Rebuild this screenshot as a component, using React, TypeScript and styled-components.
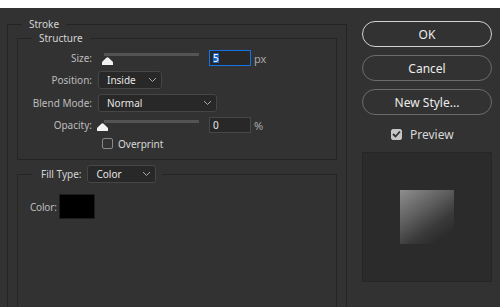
import React from "react";
import styled, { createGlobalStyle } from "styled-components";

const GlobalStyle = createGlobalStyle`
  html, body { margin: 0; padding: 0; background: #ffffff; }
  body { font-family: "Noto Sans", "Open Sans", sans-serif; }
  * { box-sizing: border-box; }
`;

const Page = styled.div`
  padding-top: 8px;
  width: 500px;
  height: 307px;
`;

const Dialog = styled.div`
  display: flex;
  width: 500px;
  height: 299px;
  background: #323232;
  overflow: hidden;
  color: #c8c8c8;
  font-size: 10px;
`;

const Main = styled.div`
  width: 347px;
  padding-left: 7px;
  flex: none;
`;

const Group = styled.fieldset<{ $pad?: string; $mt?: number; $minH?: number }>`
  margin: ${(p) => p.$mt ?? 0}px 0 0 0;
  padding: ${(p) => p.$pad ?? "0"};
  border: 1px solid #242424;
  min-width: 0;
  min-height: ${(p) => (p.$minH ? `${p.$minH}px` : "auto")};
`;

const Legend = styled.legend<{ $ml: number; $pl?: number; $pr?: number }>`
  margin-left: ${(p) => p.$ml}px;
  padding: 0 ${(p) => p.$pr ?? 7}px 0 ${(p) => p.$pl ?? 7}px;
  line-height: 14px;
  height: 14px;
  color: #d4d4d4;
  font-size: 10px;
  display: flex;
  align-items: center;
`;

const FillLegend = styled(Legend)`
  height: 18px;
  gap: 6px;
`;

const Row = styled.div<{ $mt: number; $h?: number }>`
  display: flex;
  align-items: center;
  height: ${(p) => p.$h ?? 18}px;
  margin-top: ${(p) => p.$mt}px;
`;

const Label = styled.span`
  width: 74px;
  text-align: right;
  margin-right: 6px;
  color: #bdbdbd;
  flex: none;
`;

const SliderBox = styled.div`
  position: relative;
  width: 105px;
  height: 18px;
  margin-right: 6px;
  flex: none;
`;

const Track = styled.div`
  position: absolute;
  left: 6px;
  top: 4px;
  width: 95px;
  height: 3px;
  background: #545454;
`;

const Thumb = styled.svg`
  position: absolute;
  width: 11px;
  height: 8px;
`;

const NumBox = styled.div<{ $focus?: boolean }>`
  width: 42px;
  height: 16px;
  border: 1px solid ${(p) => (p.$focus ? "#1473e6" : "#474747")};
  background: #282828;
  color: #e8e8e8;
  display: flex;
  align-items: center;
  padding-left: 3px;
  flex: none;
`;

const Selected = styled.span`
  background: #1666d0;
  color: #ffffff;
  line-height: 10px;
`;

const Unit = styled.span`
  margin-left: 3px;
  color: #a8a8a8;
  font-size: 11px;
`;

const Select = styled.div<{ $w: number }>`
  width: ${(p) => p.$w}px;
  height: 18px;
  border: 1px solid #464646;
  border-radius: 3px;
  background: #282828;
  color: #e6e6e6;
  display: flex;
  align-items: center;
  justify-content: space-between;
  padding: 0 4px 0 8px;
  flex: none;
`;

const Chevron = styled.svg`
  width: 9px;
  height: 6px;
`;

const Check = styled.span<{ $checked?: boolean }>`
  width: 11px;
  height: 11px;
  border-radius: 2px;
  border: 1px solid ${(p) => (p.$checked ? "#c6c6c6" : "#8a8a8a")};
  background: ${(p) => (p.$checked ? "#c6c6c6" : "transparent")};
  display: inline-flex;
  align-items: center;
  justify-content: center;
  flex: none;
`;

const CheckText = styled.span<{ $size?: number }>`
  color: #d8d8d8;
  font-size: ${(p) => p.$size ?? 10}px;
`;

const OverRow = styled(Row)`
  padding-left: 84px;
  gap: 5px;
`;

const ColorRow = styled(Row)`
  padding-left: 12px;
  gap: 2px;
`;

const ColorLabel = styled.span`
  color: #bdbdbd;
  letter-spacing: -0.2px;
`;

const Swatch = styled.div`
  width: 36px;
  height: 25px;
  background: #000000;
  border: 1px solid #1e1e1e;
`;

const Side = styled.div`
  width: 130px;
  margin-left: 15px;
  padding-top: 13px;
  display: flex;
  flex-direction: column;
  gap: 8px;
  flex: none;
`;

const Button = styled.div<{ $primary?: boolean }>`
  height: 26px;
  border-radius: 13px;
  border: 1px solid ${(p) => (p.$primary ? "#d2d2d2" : "#6c6c6c")};
  color: #ececec;
  font-size: 12px;
  display: flex;
  align-items: center;
  justify-content: center;
`;

const PreviewRow = styled.div`
  display: flex;
  align-items: center;
  gap: 8px;
  padding-left: 29px;
  height: 14px;
  margin-top: 4px;
`;

const PreviewBox = styled.div`
  width: 130px;
  height: 130px;
  margin-top: 3px;
  background: #2b2b2b;
  border: 1px solid #262626;
  display: flex;
  align-items: center;
  justify-content: center;
`;

const Sample = styled.div`
  width: 54px;
  height: 54px;
  background: linear-gradient(145deg, #8e8e8e 0%, #5c5c5c 40%, #3a3a3a 65%, #2b2b2b 85%);
`;

const ThumbShape = ({ left, top }: { left: number; top: number }) => (
  <Thumb viewBox="0 0 11 8" style={{ left, top }}>
    <path
      d="M0 8 L0 5.6 Q0 4.6 1 3.9 L4.4 0.7 Q5.5 -0.2 6.6 0.7 L10 3.9 Q11 4.6 11 5.6 L11 8 Z"
      fill="#f2f2f2"
    />
  </Thumb>
);

const Down = () => (
  <Chevron viewBox="0 0 9 6">
    <path d="M1 1 L4.5 4.5 L8 1" fill="none" stroke="#a8a8a8" strokeWidth="1" />
  </Chevron>
);

export default function App() {
  return (
    <>
      <GlobalStyle />
      <Page>
        <Dialog>
          <Main>
            <Group $pad="0 9px" $mt={9} $minH={320}>
              <Legend $ml={5}>Stroke</Legend>
              <Group $pad="0 0 7px 0">
                <Legend $ml={14}>Structure</Legend>
                <Row $mt={4}>
                  <Label>Size:</Label>
                  <SliderBox>
                    <Track />
                    <ThumbShape left={4} top={8} />
                  </SliderBox>
                  <NumBox $focus>
                    <Selected>5</Selected>
                  </NumBox>
                  <Unit>px</Unit>
                </Row>
                <Row $mt={4}>
                  <Label>Position:</Label>
                  <Select $w={64}>
                    <span>Inside</span>
                    <Down />
                  </Select>
                </Row>
                <Row $mt={5}>
                  <Label>Blend Mode:</Label>
                  <Select $w={119}>
                    <span>Normal</span>
                    <Down />
                  </Select>
                </Row>
                <Row $mt={4}>
                  <Label>Opacity:</Label>
                  <SliderBox>
                    <Track />
                    <ThumbShape left={-1} top={7} />
                  </SliderBox>
                  <NumBox>0</NumBox>
                  <Unit>%</Unit>
                </Row>
                <OverRow $mt={1} $h={17}>
                  <Check />
                  <CheckText>Overprint</CheckText>
                </OverRow>
              </Group>
              <Group $mt={5} $minH={200}>
                <FillLegend $ml={14} $pl={9} $pr={6}>
                  <span>Fill Type:</span>
                  <Select $w={69}>
                    <span>Color</span>
                    <Down />
                  </Select>
                </FillLegend>
                <ColorRow $mt={11} $h={25}>
                  <ColorLabel>Color:</ColorLabel>
                  <Swatch />
                </ColorRow>
              </Group>
            </Group>
          </Main>
          <Side>
            <Button $primary>OK</Button>
            <Button>Cancel</Button>
            <Button>New Style...</Button>
            <PreviewRow>
              <Check $checked>
                <svg width="9" height="8" viewBox="0 0 9 8">
                  <path d="M1 4 L3.5 6.5 L8 1.5" fill="none" stroke="#333" strokeWidth="1.8" />
                </svg>
              </Check>
              <CheckText $size={12}>Preview</CheckText>
            </PreviewRow>
            <PreviewBox>
              <Sample />
            </PreviewBox>
          </Side>
        </Dialog>
      </Page>
    </>
  );
}
